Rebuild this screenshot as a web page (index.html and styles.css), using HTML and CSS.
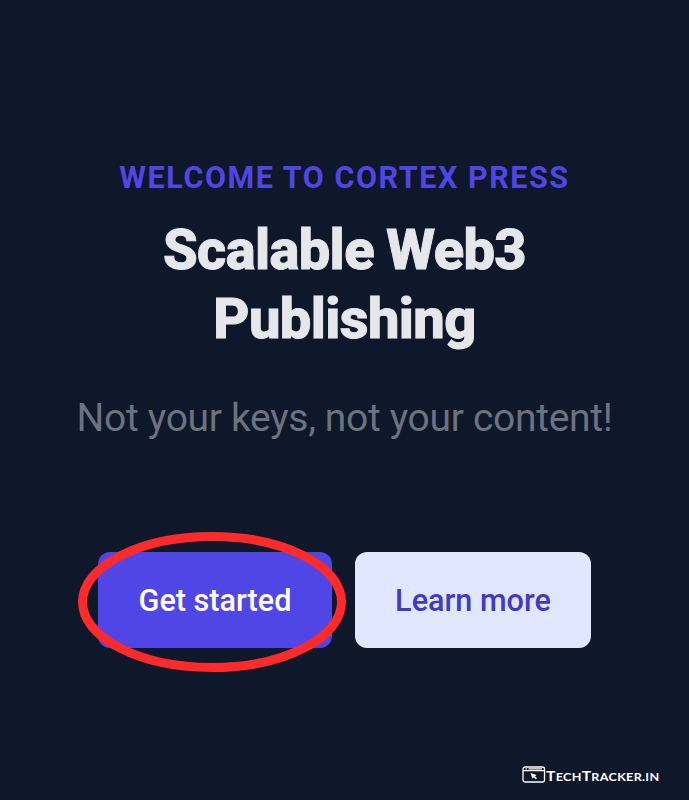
FILE: index.html
```html
<!DOCTYPE html>
<html lang="en">
<head>
<meta charset="utf-8">
<title>Cortex Press</title>
<link rel="stylesheet" href="styles.css">
</head>
<body>
<main class="hero">
  <p class="eyebrow">Welcome to Cortex Press</p>
  <h1 class="title">Scalable Web3<br>Publishing</h1>
  <p class="tagline">Not your keys, not your content!</p>
  <div class="actions">
    <a class="btn primary">Get started
      <svg class="ring" viewBox="0 0 270 142"><ellipse cx="135" cy="71" rx="129.5" ry="65.5"/></svg>
    </a>
    <a class="btn secondary">Learn more</a>
  </div>
</main>
<footer class="credit">
  <svg class="mark" viewBox="0 0 24 17"><rect x="1" y="1" width="21.5" height="15" rx="2"/><path d="M1 4.6H22.5M3.5 2.8H5M6.5 2.8H20"/><path class="cursor" d="M8.5 7L14.5 9L13 10.2L15 12.2L13.8 13.3L11.8 11.3L10.5 12.8Z"/></svg>
  <span class="brand"><b>T</b>ECH<b>T</b>RACKER.IN</span>
</footer>
</body>
</html>
```
FILE: styles.css
```css
* { box-sizing: border-box; margin: 0; }
body { height: 800px; background: #0f172a; font-family: Roboto, sans-serif; display: flex; flex-direction: column; overflow: hidden; }
.hero { flex: 1; padding-top: 158px; text-align: center; }
.eyebrow { font-size: 30.5px; line-height: 39px; font-weight: 700; letter-spacing: 1.55px; text-transform: uppercase; color: #4f46e5; }
.title { margin-top: 19px; font-size: 56px; line-height: 69px; font-weight: 800; letter-spacing: -0.6px; word-spacing: -1px; -webkit-text-stroke: 1px #e5e7eb; color: #e5e7eb; }
.tagline { margin-top: 37px; font-size: 39px; line-height: 54px; letter-spacing: -0.32px; color: #6b7280; }
.actions { margin-top: 107px; display: flex; justify-content: center; gap: 23px; }
.btn { position: relative; height: 96px; border-radius: 12px; font-size: 30.6px; line-height: 98px; font-weight: 500; white-space: nowrap; }
.primary { width: 234px; background: #4f46e5; color: #fff; }
.secondary { width: 236px; background: #e0e7ff; color: #4338ca; }
.ring { position: absolute; left: -21px; top: -21px; width: 270px; height: 142px; fill: none; stroke: #ff2a2a; stroke-width: 9; }
.credit { height: 35px; padding-right: 29px; display: flex; justify-content: flex-end; align-items: flex-start; color: #fff; }
.mark { width: 24px; height: 17px; margin-top: 1px; fill: none; stroke: #fff; stroke-width: 1.3; }
.cursor { fill: #fff; stroke: none; }
.brand { width: 114px; white-space: nowrap; font-family: Lato, sans-serif; font-size: 10.5px; line-height: 23px; font-weight: 700; letter-spacing: 0.25px; transform: scaleX(1.2); transform-origin: left; }
.brand b { font-size: 13px; font-weight: 700; }
```
